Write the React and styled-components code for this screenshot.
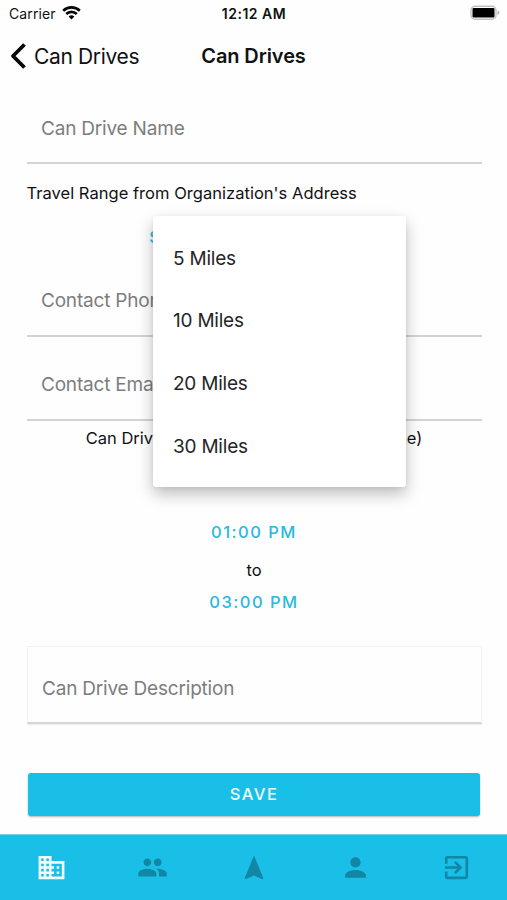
import React from "react";
import styled, { createGlobalStyle } from "styled-components";
import { MdBusiness, MdPeople, MdNavigation, MdPerson, MdExitToApp } from "react-icons/md";

const GlobalStyle = createGlobalStyle`
  * { box-sizing: border-box; }
  body { margin: 0; background: #fff; font-family: Inter, "Liberation Sans", sans-serif; color: #111; }
`;
const Screen = styled.div`
  position: relative;
  width: 507px;
  height: 900px;
  display: flex;
  flex-direction: column;
  overflow: hidden;
  background: #fefefe;
  white-space: nowrap;
`;
const StatusBar = styled.div`
  height: 27px;
  display: grid;
  grid-template-columns: 1fr auto 1fr;
  align-items: center;
  padding: 0 6px 0 9px;
`;
const Carrier = styled.div`
  display: flex;
  align-items: center;
  gap: 6px;
  font-size: 14px;
  letter-spacing: 0.12px;

  svg {
    margin-top: -1px;
  }
`;
const Clock = styled.div`
  font-size: 14px;
  font-weight: 600;
  letter-spacing: 0.5px;
  margin-left: -2px;
`;
const BatteryIcon = styled.svg`
  justify-self: end;
  margin-top: -1px;
`;
const Header = styled.header`
  height: 58px;
  display: grid;
  grid-template-columns: 1fr auto 1fr;
  align-items: center;
  padding: 0 10px;
`;
const Back = styled.div`
  display: flex;
  align-items: center;
  gap: 7px;
  font-size: 21px;
  letter-spacing: -0.35px;
`;
const Title = styled.h1`
  margin: 0;
  font-size: 20px;
  font-weight: 600;
  letter-spacing: -0.1px;
`;
const Form = styled.main`
  flex: 1;
  display: flex;
  flex-direction: column;
  padding: 0 25.5px 0 26.5px;
`;
const Field = styled.div`
  height: ${(p) => p.$height}px;
  padding: ${(p) => p.$top}px 14.5px 0;
  border-bottom: 2px solid #d3d3d3;
  font-size: 19px;
  line-height: 24px;
  letter-spacing: -0.2px;
  color: #7d7d7d;
`;
const TextArea = styled(Field)`
  margin-top: 33px;
  border: 1px solid #f3f3f3;
  border-bottom: 2px solid #d6d6d6;
  box-shadow: 0 1px 1px #eee;
`;
const Label = styled.div`
  height: ${(p) => p.$height}px;
  line-height: ${(p) => p.$height}px;
  font-size: 16.5px;
  letter-spacing: ${(p) => p.$spacing || 0.03}px;
  text-align: ${(p) => p.$align || "left"};
`;
const TextButton = styled.div`
  height: ${(p) => p.$height}px;
  line-height: ${(p) => p.$height}px;
  text-align: center;
  font-size: 16.5px;
  font-weight: ${(p) => p.$weight || 450};
  letter-spacing: ${(p) => p.$spacing || 1.5}px;
  color: #27b9df;
`;
const DateGap = styled.div`
  height: 59px;
`;
const SaveButton = styled.div`
  height: 43px;
  margin: 49px 1.5px 0;
  padding-bottom: 1px;
  display: flex;
  align-items: center;
  justify-content: center;
  border-radius: 3px;
  background: #1abfe8;
  box-shadow: 0 1px 2px rgba(0, 0, 0, 0.3);
  color: #f0fbff;
  font-size: 16.5px;
  font-weight: 500;
  letter-spacing: 1.5px;
`;
const Menu = styled.div`
  position: absolute;
  left: 153px;
  top: 216px;
  width: 253px;
  height: 271px;
  padding: 11.6px 20px 8px;
  border-radius: 3px;
  background: #fff;
  box-shadow: 0 7px 16px rgba(0, 0, 0, 0.26), 0 1px 4px rgba(0, 0, 0, 0.06);
`;
const MenuItem = styled.div`
  height: 62.7px;
  line-height: 62.7px;
  font-size: 19px;
  letter-spacing: -0.22px;
  color: #252525;
`;
const TabBar = styled.nav`
  height: 66px;
  padding-left: 1px;
  display: grid;
  grid-template-columns: repeat(5, 1fr);
  background: #1abfe8;
  border-top: 1px solid #75cfe5;
`;
const Tab = styled.div`
  display: flex;
  align-items: center;
  justify-content: center;
  color: ${(p) => (p.$active ? "#f1fcff" : "#1186a5")};
`;

const tabs = [
  { Icon: MdBusiness, size: 31 },
  { Icon: MdPeople, size: 31 },
  { Icon: MdNavigation, size: 30 },
  { Icon: MdPerson, size: 31 },
  { Icon: MdExitToApp, size: 31 },
];
const ranges = [5, 10, 20, 30];

export default function App() {
  return (
    <Screen>
      <GlobalStyle />
      <StatusBar>
        <Carrier>
          <span>Carrier</span>
          <svg width="19" height="14" viewBox="0 0 19 14" fill="none" stroke="#050505" strokeWidth="2.6">
            <path d="M1.2 4.7a12 12 0 0 1 16.6 0M4.2 8a7.6 7.6 0 0 1 10.6 0" />
            <path d="M9.5 13.5 6.6 10.6a4.2 4.2 0 0 1 5.8 0z" fill="#050505" stroke="none" />
          </svg>
        </Carrier>
        <Clock>12:12 AM</Clock>
        <BatteryIcon width="32" height="16" viewBox="0 0 32 16">
          <rect x="2" y="1.2" width="25" height="13" rx="4" fill="#fff" stroke="#c0c0c0" strokeWidth="1.4" />
          <rect x="3.5" y="3" width="22" height="9.5" rx="1" fill="#000" />
          <path d="M28.5 5.2q4 2.5 0 5z" fill="#b5b5b5" />
        </BatteryIcon>
      </StatusBar>
      <Header>
        <Back>
          <svg width="17" height="28" viewBox="0 0 17 28" fill="none" stroke="#080808" strokeWidth="3.8" strokeLinejoin="round">
            <path d="M14.5 2.5 3 14l11.5 11.5" />
          </svg>
          <span>Can Drives</span>
        </Back>
        <Title>Can Drives</Title>
        <span />
      </Header>
      <Form>
        <Field $height={79} $top={32}>Can Drive Name</Field>
        <Label $height={59}>Travel Range from Organization's Address</Label>
        <TextButton $height={29} $spacing={0.95} $weight={500}>SELECT TRAVEL RANGE</TextButton>
        <Field $height={85} $top={37}>Contact Phone Number</Field>
        <Field $height={84} $top={36}>Contact Email</Field>
        <Label $height={35} $align="center" $spacing={-0.02}>Can Drive Times (Start Time and End Time)</Label>
        <DateGap />
        <TextButton $height={34}>01:00 PM</TextButton>
        <Label $height={42} $align="center">to</Label>
        <TextButton $height={22}>03:00 PM</TextButton>
        <TextArea $height={78} $top={30}>Can Drive Description</TextArea>
        <SaveButton>SAVE</SaveButton>
      </Form>
      <TabBar>
        {tabs.map(({ Icon, size }, i) => (
          <Tab key={i} $active={i === 0}>
            <Icon size={size} />
          </Tab>
        ))}
      </TabBar>
      <Menu>
        {ranges.map((n) => (
          <MenuItem key={n}>{n} Miles</MenuItem>
        ))}
      </Menu>
    </Screen>
  );
}
